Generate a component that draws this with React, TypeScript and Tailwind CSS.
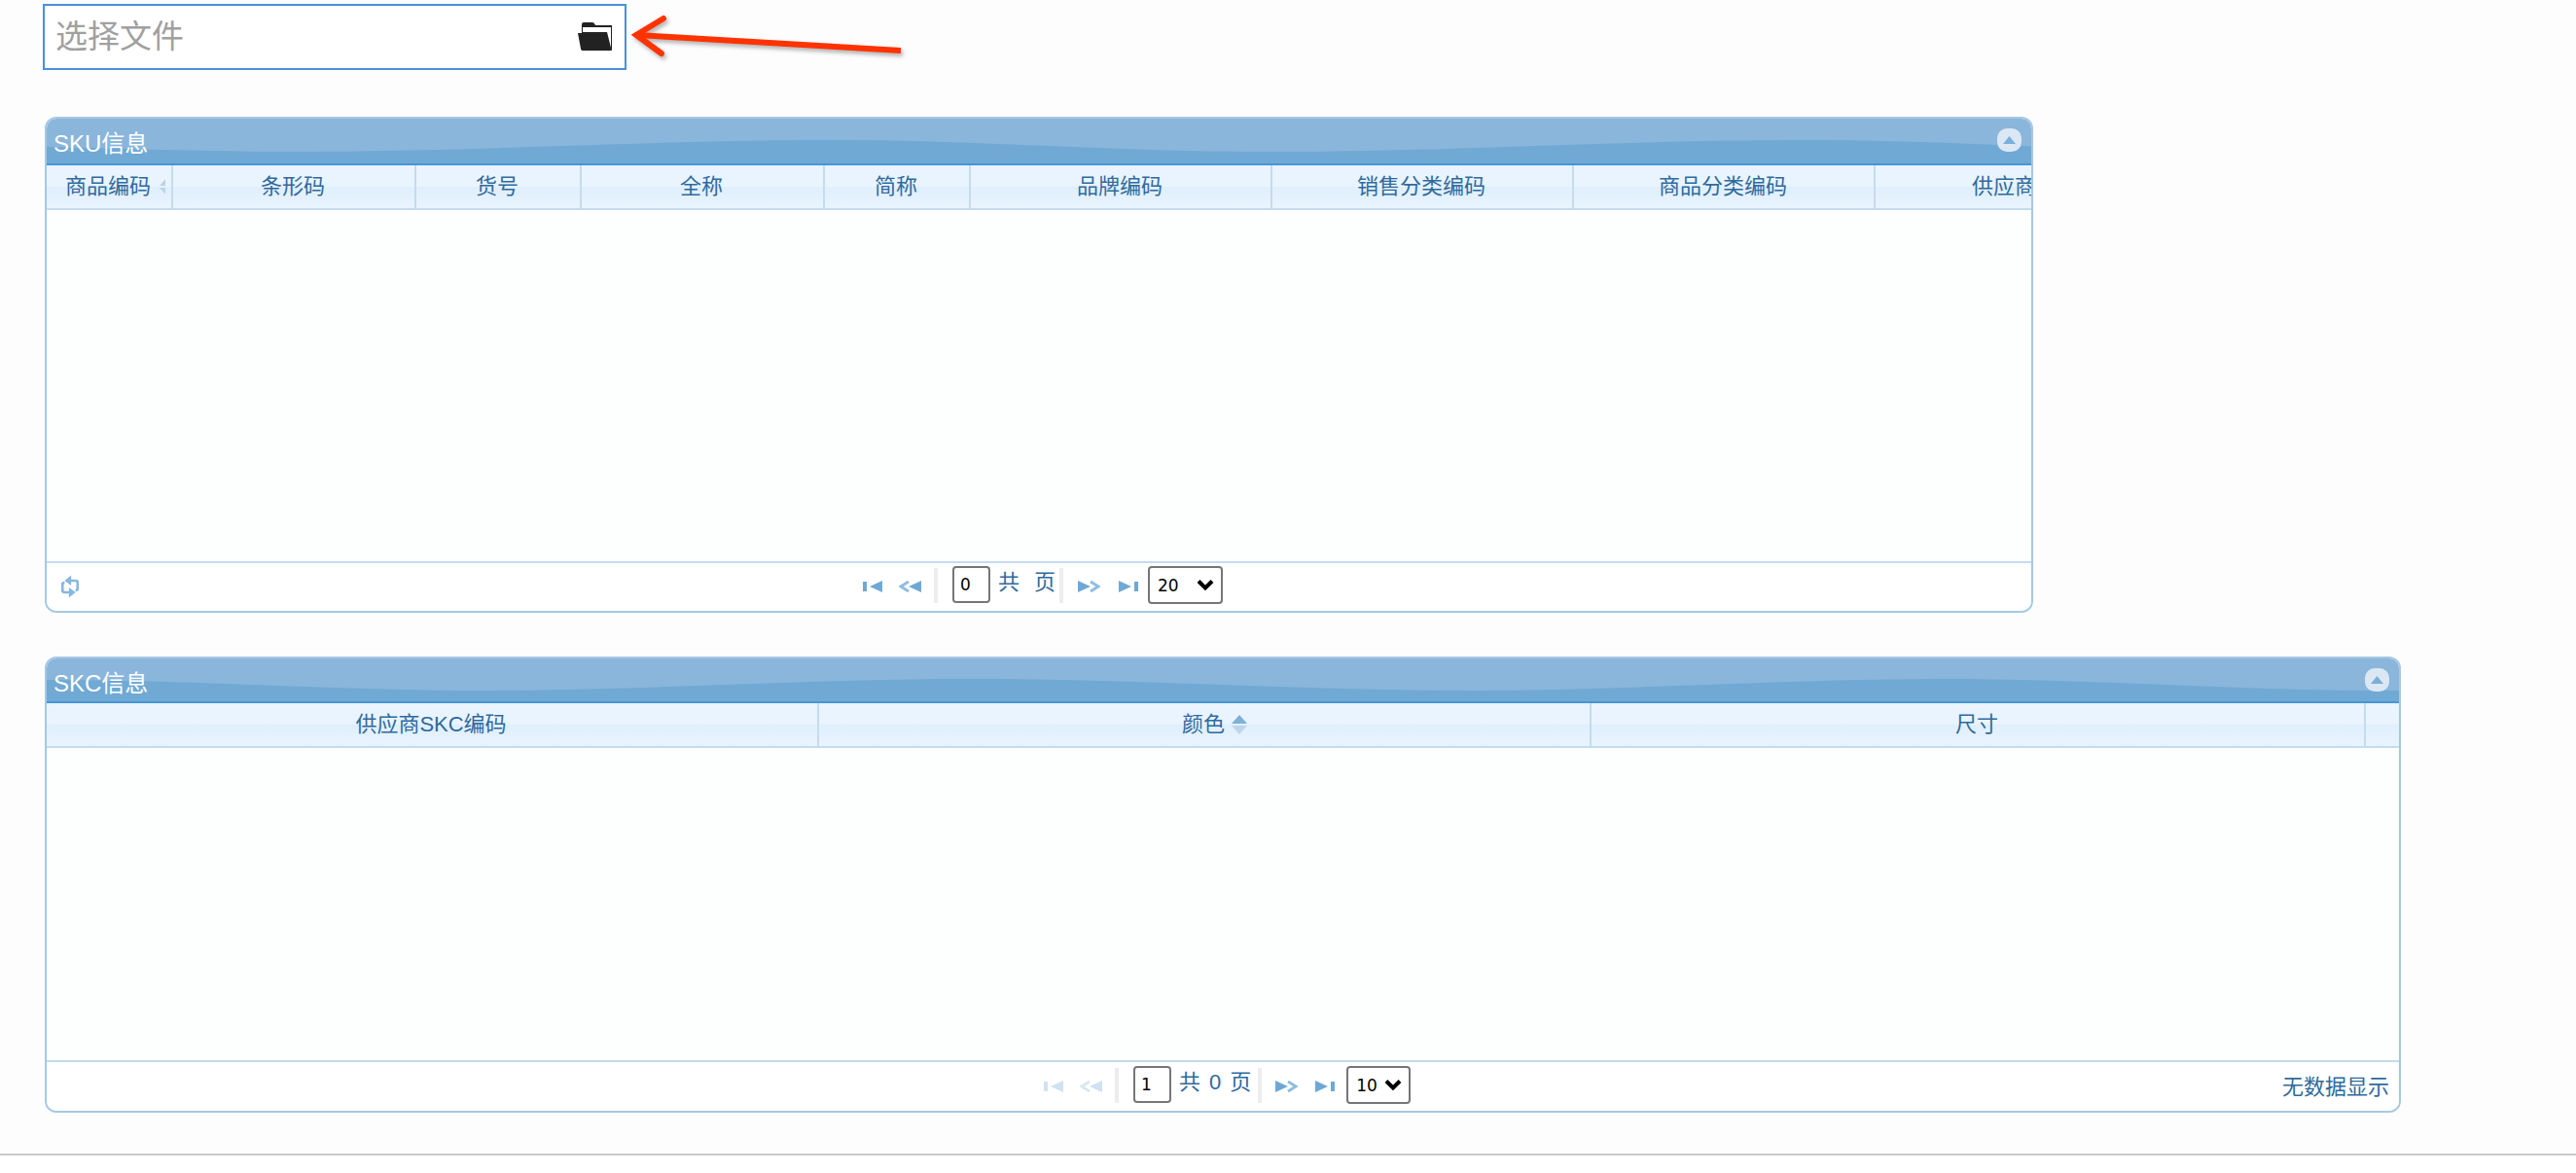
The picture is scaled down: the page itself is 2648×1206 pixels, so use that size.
const font = "font-['Liberation_Sans','Noto_Sans_CJK_SC',sans-serif]";

type Column = { title: string; width: number; sort?: "clipped" | "active" };

const skuColumns: Column[] = [
  { title: "商品编码", width: 130, sort: "clipped" },
  { title: "条形码", width: 250 },
  { title: "货号", width: 170 },
  { title: "全称", width: 250 },
  { title: "简称", width: 150 },
  { title: "品牌编码", width: 310 },
  { title: "销售分类编码", width: 310 },
  { title: "商品分类编码", width: 310 },
  { title: "供应商货号", width: 310 },
];

const skcColumns: Column[] = [
  { title: "供应商SKC编码", width: 794 },
  { title: "颜色", width: 794, sort: "active" },
  { title: "尺寸", width: 796 },
  { title: "", width: 34 },
];

const skuWave =
  "M0 29C90 31 170 34 260 34C450 34 620 22 811 22C960 22 1100 34 1257 34C1450 34 1620 22 1808 22C1960 22 2100 34 2260 34L2422 34V46H0z";
const skcWave =
  "M0 22C150 22 300 33 452 33C620 33 780 21 952 21C1120 21 1290 33 1462 33C1630 33 1790 21 1952 21C2110 21 2250 33 2402 33L2422 33V46H0z";

function FolderIcon() {
  return (
    <svg width="36" height="30" viewBox="0 0 36 30" className="mr-[12px] shrink-0">
      <path d="M4 2Q4 0 6 0H15Q17 0 18 3H35V28Q35 29 34 29H6Q4 29 4 27z" fill="#222" />
      <path d="M5 5H34V26L30 10H5z" fill="#fff" />
      <path d="M0 11H29L34 28Q34 29 33 29H5Q3 29 3 27z" fill="#222" />
    </svg>
  );
}

function Arrow() {
  return (
    <svg width="300" height="60" viewBox="0 0 300 60" className="absolute left-[640px] top-[8px] drop-shadow-[2px_3px_2px_rgba(0,0,0,0.3)]">
      <path d="M15 28L286 44" stroke="#ff3300" strokeWidth="6" fill="none" />
      <path d="M42 11L14 28L40 47" stroke="#ff3300" strokeWidth="6" fill="none" strokeLinecap="round" strokeLinejoin="miter" />
    </svg>
  );
}

function SortArrows({ sort }: { sort: "clipped" | "active" }) {
  const active = sort === "active";
  return (
    <div className={`absolute top-1/2 left-full -translate-y-1/2 overflow-hidden ${active ? "ml-[7px] w-[16px]" : "ml-[9px] w-[6px]"}`}>
      <svg width="16" height="22" viewBox="0 0 16 22" className="block blur-[0.4px]">
        <path d="M8 1L16 10H0z" fill={active ? "#7eb0d9" : "#bcd3e6"} />
        <path d="M8 21L16 12H0z" fill="#bcd5ea" />
      </svg>
    </div>
  );
}

function HeaderRow({ columns }: { columns: Column[] }) {
  return (
    <div className="flex h-[46px] shrink-0 overflow-hidden border-b-2 border-[#c5dbee] bg-[linear-gradient(#e9f4fe_0%,#e9f4fe_50%,#dfeffc_50%,#e9f4fe_100%)]">
      {columns.map((col, i) => (
        <div
          key={i}
          style={{ width: col.width }}
          className="flex shrink-0 items-center justify-center whitespace-nowrap border-r-2 border-[#c5dbee] pb-[1px] pr-[2px] text-[22px] text-[#2f6a9e] last:border-r-0"
        >
          <span className="relative">
            {col.title}
            {col.sort && <SortArrows sort={col.sort} />}
          </span>
        </div>
      ))}
    </div>
  );
}

function NavIcon({ kind, disabled }: { kind: "first" | "prev" | "next" | "last"; disabled?: boolean }) {
  const dark = disabled ? "#cfe2f2" : "#6fa8d6";
  const light = disabled ? "#d8e8f4" : "#8fbde2";
  const wide = kind === "prev" || kind === "next";
  return (
    <svg width={wide ? 23 : 20} height="12" viewBox={wide ? "0 0 23 12" : "0 0 20 12"} className="mt-[15px] shrink-0 blur-[0.4px]">
      {kind === "first" && <path d="M0 1h4v10H0zM20 0v12L7 6z" fill={dark} />}
      {kind === "last" && <path d="M0 0v12L13 6zM16 1h4v10h-4z" fill={dark} />}
      {kind === "prev" && (
        <>
          <path d="M10 1L2 6l8 5" stroke={light} strokeWidth="3" fill="none" />
          <path d="M23 0v12L10 6z" fill={dark} />
        </>
      )}
      {kind === "next" && (
        <>
          <path d="M0 0v12L13 6z" fill={dark} />
          <path d="M13 1l8 5-8 5" stroke={light} strokeWidth="3" fill="none" />
        </>
      )}
    </svg>
  );
}

function Sep({ className }: { className: string }) {
  return <div className={`mt-[2px] h-[36px] w-[4px] shrink-0 bg-[#ededed] ${className}`} />;
}

function PageBox({ value }: { value: string }) {
  return (
    <div className="ml-[15px] flex h-[38px] w-[39px] shrink-0 items-center rounded-[4px] border-2 border-[#767676] bg-white pl-[6px] font-['DejaVu_Sans',sans-serif] text-[17px] text-black">
      {value}
    </div>
  );
}

function PageSelect({ value, className }: { value: string; className: string }) {
  return (
    <div className={`flex h-[39px] shrink-0 items-center justify-between rounded-[4px] border-2 border-[#767676] bg-white pl-[8px] pr-[7px] font-['DejaVu_Sans',sans-serif] text-[17px] text-black ${className}`}>
      <span>{value}</span>
      <svg width="18" height="13" viewBox="0 0 18 13">
        <path d="M2 2.500l7 7 7-7" stroke="#000" strokeWidth="4" fill="none" />
      </svg>
    </div>
  );
}

function RefreshIcon() {
  return (
    <svg width="18" height="24" viewBox="0 0 16 24" preserveAspectRatio="none" fill="none" stroke="#86b8e0" strokeWidth="2.500" className="shrink-0 blur-[0.4px]">
      <path d="M8 6H13Q15 6 15 8V14Q15 16 13 16" />
      <path d="M8 18H3Q1 18 1 16V10Q1 8 3 8" />
      <path d="M9 0.500V11L3 6z" fill="#86b8e0" stroke="none" />
      <path d="M7 13V23.500L13 18z" fill="#86b8e0" stroke="none" />
    </svg>
  );
}

function CollapseButton() {
  return (
    <div className="absolute right-[10px] top-[10px] flex h-[24px] w-[25px] items-center justify-center rounded-[10px] bg-[#dbe8f4]">
      <svg width="13" height="8" viewBox="0 0 13 8">
        <path d="M6.500 0l6.500 8H0z" fill="#7aaedb" />
      </svg>
    </div>
  );
}

function Panel({ title, width, height, barHeight, wave, columns, children }: { title: string; width: number; height: number; barHeight: string; wave: string; columns: Column[]; children: React.ReactNode }) {
  return (
    <div style={{ width, height }} className="flex flex-col overflow-hidden rounded-[12px] border-2 border-[#a5c8e4] bg-[#fdfefe]">
      <div className={`relative shrink-0 overflow-hidden border-b-2 border-[#4596d8] bg-[#8ab6db] ${barHeight}`}>
        <svg width="2422" height="46" viewBox="0 0 2422 46" className="absolute left-0 top-0 blur-[0.5px]">
          <path d={wave} fill="#70a9d4" />
        </svg>
        <div className="absolute left-[7px] top-[12px] text-[24px] leading-[28px] text-white">{title}</div>
        <CollapseButton />
      </div>
      <HeaderRow columns={columns} />
      <div className="flex-1" />
      {children}
    </div>
  );
}

export default function App() {
  return (
    <div className={`relative h-[1206px] w-[2648px] overflow-hidden bg-[#fdfdfd] ${font}`}>
      <div className="flex flex-col pl-[44px] pt-[4px]">
        <div className="flex h-[68px] w-[600px] items-center justify-between border-2 border-[#4a90d9] bg-white pl-[11px]">
          <span className="text-[33px] leading-[40px] text-[#a0a0a0]">选择文件</span>
          <FolderIcon />
        </div>
        <div className="ml-[2px] mt-[48px]">
          <Panel title="SKU信息" width={2044} height={510} barHeight="h-[48px]" columns={skuColumns} wave={skuWave}>
            <div className="flex h-[51px] shrink-0 items-start border-t-2 border-[#c5dbee] bg-white pl-[15px] pt-[3px] text-[22px] leading-[28px] text-[#2f6a9e]">
              <div className="mt-[9px]"><RefreshIcon /></div>
              <div className="ml-[806px]"><NavIcon kind="first" /></div>
              <div className="ml-[17px]"><NavIcon kind="prev" /></div>
              <Sep className="ml-[13px]" />
              <PageBox value="0" />
              <span className="ml-[8px] mt-[3px]">共</span>
              <span className="ml-[15px] mt-[3px]">页</span>
              <Sep className="ml-[4px]" />
              <div className="ml-[15px]"><NavIcon kind="next" /></div>
              <div className="ml-[19px]"><NavIcon kind="last" /></div>
              <PageSelect value="20" className="ml-[10px] w-[77px]" />
            </div>
          </Panel>
        </div>
        <div className="ml-[2px] mt-[45px]">
          <Panel title="SKC信息" width={2422} height={469} barHeight="h-[46px]" columns={skcColumns} wave={skcWave}>
            <div className="flex h-[52px] shrink-0 items-start border-t-2 border-[#c5dbee] bg-white pl-[1025px] pr-[10px] pt-[4px] text-[22px] leading-[28px] text-[#2f6a9e]">
              <NavIcon kind="first" disabled />
              <div className="ml-[17px]"><NavIcon kind="prev" disabled /></div>
              <Sep className="ml-[13px]" />
              <PageBox value="1" />
              <span className="ml-[8px] mt-[3px]">共</span>
              <span className="ml-[9px] mt-[3px]">0</span>
              <span className="ml-[9px] mt-[3px]">页</span>
              <Sep className="ml-[7px]" />
              <div className="ml-[14px]"><NavIcon kind="next" /></div>
              <div className="ml-[18px]"><NavIcon kind="last" /></div>
              <PageSelect value="10" className="ml-[12px] w-[66px]" />
              <span className="ml-auto mt-[8px]">无数据显示</span>
            </div>
          </Panel>
        </div>
      </div>
      <Arrow />
      <div className="absolute inset-x-0 top-[1186px] h-[20px] border-t-2 border-[#c9c9c9] bg-white" />
    </div>
  );
}
